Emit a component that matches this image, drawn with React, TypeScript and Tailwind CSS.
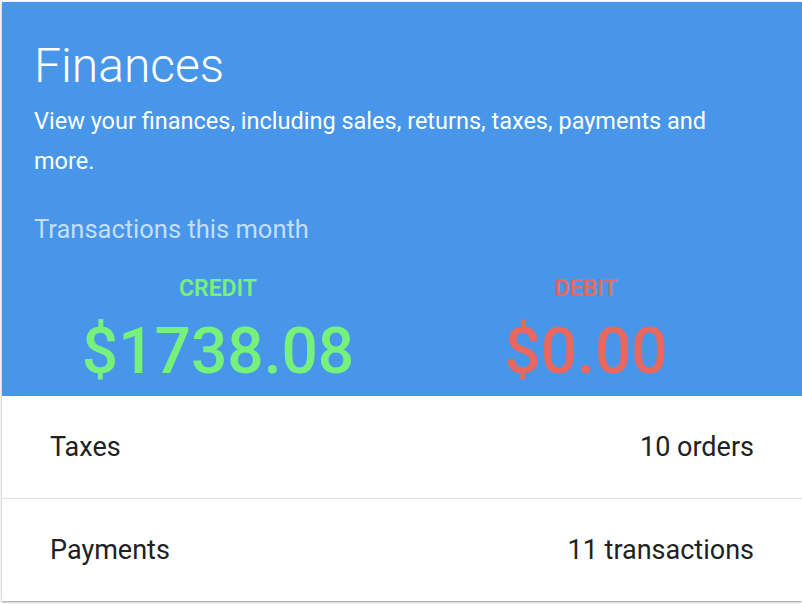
export default function App() {
  return (
    <div className="min-h-screen bg-white pl-[2px] pt-[2px] font-['Roboto',_'Liberation_Sans',_sans-serif]">
      <div className="w-full bg-white shadow-[0_1px_3px_rgba(0,0,0,0.3),_0_1px_1px_rgba(0,0,0,0.14)]">
        <div className="bg-[#4896ea] px-[32px] pt-[36px] pb-[11px] text-white">
          <h1 className="text-[48px] font-light leading-[56px]">Finances</h1>
          <p className="mt-[7px] text-[23.5px] leading-[40px]">
            View your finances, including sales, returns, taxes, payments and more.
          </p>
          <p className="mt-[32px] text-[25.5px] leading-[32px] text-white/70">
            Transactions this month
          </p>
          <div className="mt-[30px] grid grid-cols-2 text-center">
            <div>
              <div className="text-[23px] font-semibold leading-[28px] text-[#76f27c]">CREDIT</div>
              <div className="mt-[16px] text-[64px] font-medium leading-[66px] text-[#76f27c]">
                $1738.08
              </div>
            </div>
            <div>
              <div className="text-[23px] font-semibold leading-[28px] text-[#e8675f]">DEBIT</div>
              <div className="mt-[16px] text-[64px] font-medium leading-[66px] text-[#e8675f]">
                $0.00
              </div>
            </div>
          </div>
        </div>
        <Row label="Taxes" value="10 orders" />
        <div className="h-px bg-[#e0e0e0]" />
        <Row label="Payments" value="11 transactions" />
      </div>
    </div>
  );
}

function Row({ label, value }: { label: string; value: string }) {
  return (
    <div className="flex h-[102px] items-center justify-between px-[48px] text-[27px] text-[#212121]">
      <span>{label}</span>
      <span>{value}</span>
    </div>
  );
}
